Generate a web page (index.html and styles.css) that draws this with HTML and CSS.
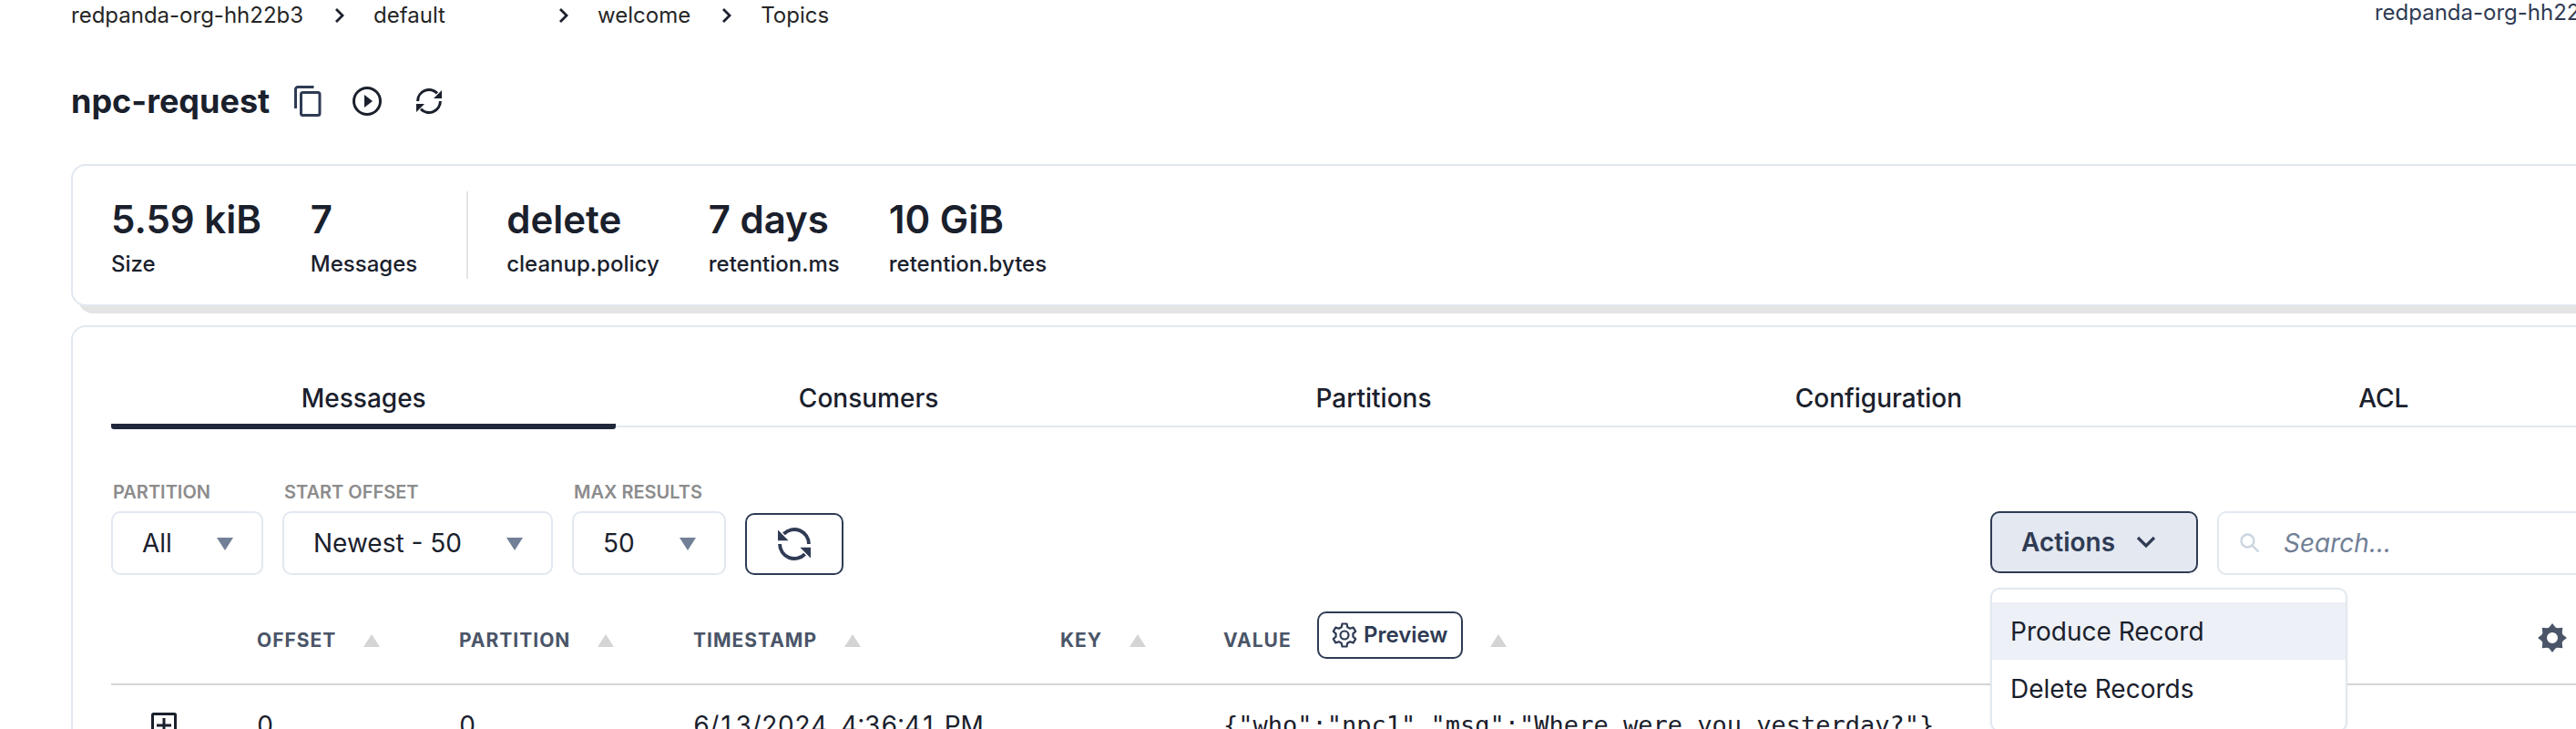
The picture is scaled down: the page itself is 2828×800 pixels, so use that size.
FILE: index.html
```html
<!DOCTYPE html>
<html lang="en">
<head>
<meta charset="utf-8">
<title>npc-request - Topics</title>
<link rel="stylesheet" href="styles.css">
</head>
<body>
<svg class="defs" aria-hidden="true">
  <symbol id="chevron" viewBox="0 0 12 18"><path d="M2 2l7 7-7 7" fill="none" stroke="currentColor" stroke-width="2.8"/></symbol>
  <symbol id="tri" viewBox="0 0 18 14"><path d="M9 0l9 14H0z" fill="currentColor"/></symbol>
  <symbol id="sync" viewBox="0 0 28 28"><path d="M1.6 14A12.4 12.4 0 0 1 23 5.4M26.400 14A12.400 12.400 0 0 1 5 22.600" fill="none" stroke="currentColor" stroke-width="3"/><path d="M28 2v9h-9zM0 26v-9h9z" fill="currentColor"/></symbol>
</svg>
<header class="topbar">
  <nav class="crumbs" aria-label="Breadcrumb">
    <a class="crumb" href="#">redpanda-org-hh22b3</a>
    <svg class="sep"><use href="#chevron"/></svg>
    <a class="crumb crumb-wide" href="#">default</a>
    <svg class="sep"><use href="#chevron"/></svg>
    <a class="crumb" href="#">welcome</a>
    <svg class="sep"><use href="#chevron"/></svg>
    <a class="crumb" href="#">Topics</a>
  </nav>
  <span class="org">redpanda-org-hh22b3</span>
</header>
<main class="page">
  <div class="title-row">
    <h1 class="title">npc-request</h1>
    <button class="icon-btn copy" aria-label="Copy name"><svg width="30" height="34" viewBox="0 0 30 34" fill="none" stroke="currentColor" stroke-width="3"><path d="M1.5 25V4a2.500 2.500 0 0 1 2.500-2.500H21.500"/><rect x="7.500" y="7.500" width="20.500" height="25" rx="2"/></svg></button>
    <button class="icon-btn play" aria-label="Play"><svg width="32" height="32" viewBox="0 0 32 32"><circle cx="16" cy="16" r="14.500" fill="none" stroke="currentColor" stroke-width="3"/><path d="M13 9l9 7-9 7z" fill="currentColor"/></svg></button>
    <button class="icon-btn" aria-label="Refresh"><svg width="28" height="28"><use href="#sync"/></svg></button>
  </div>
  <section class="card stats">
    <div class="stat"><strong class="stat-value">5.59 kiB</strong><span class="stat-label">Size</span></div>
    <div class="stat"><strong class="stat-value">7</strong><span class="stat-label">Messages</span></div>
    <div class="divider"></div>
    <div class="stat"><strong class="stat-value">delete</strong><span class="stat-label">cleanup.policy</span></div>
    <div class="stat"><strong class="stat-value">7 days</strong><span class="stat-label">retention.ms</span></div>
    <div class="stat"><strong class="stat-value">10 GiB</strong><span class="stat-label">retention.bytes</span></div>
  </section>
  <section class="card content">
    <div class="tabs" role="tablist">
      <button class="tab active" role="tab" aria-selected="true">Messages</button>
      <button class="tab" role="tab">Consumers</button>
      <button class="tab" role="tab">Partitions</button>
      <button class="tab" role="tab">Configuration</button>
      <button class="tab" role="tab">ACL</button>
    </div>
    <div class="toolbar">
      <div class="field"><label class="field-label" for="partition">PARTITION</label>
        <div class="select-box"><select class="select" id="partition"><option>All</option></select><svg class="caret"><use href="#tri"/></svg></div></div>
      <div class="field"><label class="field-label" for="offset">START OFFSET</label>
        <div class="select-box"><select class="select" id="offset"><option>Newest - 50</option></select><svg class="caret"><use href="#tri"/></svg></div></div>
      <div class="field"><label class="field-label" for="max">MAX RESULTS</label>
        <div class="select-box"><select class="select" id="max"><option>50</option></select><svg class="caret"><use href="#tri"/></svg></div></div>
      <button class="reload" aria-label="Reload messages"><svg class="flip" width="36" height="36"><use href="#sync"/></svg></button>
      <div class="actions-wrap">
        <button class="actions" aria-haspopup="menu" aria-expanded="true">Actions <svg width="22" height="14" viewBox="0 0 22 14"><path d="M2 2l9 9 9-9" fill="none" stroke="currentColor" stroke-width="3.200"/></svg></button>
        <div class="menu" role="menu">
          <button class="menu-item hover" role="menuitem">Produce Record</button>
          <button class="menu-item" role="menuitem">Delete Records</button>
        </div>
      </div>
      <div class="search-box">
        <svg width="22" height="22" viewBox="0 0 22 22" fill="none" stroke="currentColor" stroke-width="2.400"><circle cx="8.500" cy="8.500" r="7"/><path d="M13.500 13.500l7 7"/></svg>
        <input class="search" type="text" placeholder="Search..." aria-label="Search">
      </div>
    </div>
    <table class="table">
      <colgroup><col class="c-expand"><col class="c-offset"><col class="c-part"><col class="c-time"><col class="c-key"><col><col class="c-gear"></colgroup>
      <thead><tr>
        <th></th>
        <th><div class="th">OFFSET <svg class="sort"><use href="#tri"/></svg></div></th>
        <th><div class="th">PARTITION <svg class="sort"><use href="#tri"/></svg></div></th>
        <th><div class="th">TIMESTAMP <svg class="sort"><use href="#tri"/></svg></div></th>
        <th><div class="th">KEY <svg class="sort"><use href="#tri"/></svg></div></th>
        <th><div class="th">VALUE <button class="preview"><svg width="28" height="28" viewBox="0 0 28 28" fill="none" stroke="currentColor" stroke-width="2.200"><path d="M11.500 1.500h5l.8 3.700 2.800 1.600 3.600-1.200 2.500 4.300-2.800 2.500v3.200l2.800 2.500-2.500 4.300-3.600-1.200-2.800 1.600-.8 3.700h-5l-.8-3.700-2.800-1.600-3.600 1.200-2.500-4.300 2.800-2.500v-3.200L1.800 9.900l2.500-4.300 3.600 1.200 2.800-1.600z" stroke-linejoin="round"/><circle cx="14" cy="14" r="4.500"/></svg>Preview</button><svg class="sort"><use href="#tri"/></svg></div></th>
        <th><button class="gear" aria-label="Columns"><svg width="32" height="32" viewBox="0 0 32 32"><path fill="currentColor" fill-rule="evenodd" d="M16 0l3.500 4.500 2 .8L27.300 4.700l-.6 5.800.8 2L32 16l-4.500 3.500-.8 2 .6 5.800-5.800-.6-2 .8L16 32l-3.500-4.500-2-.8-5.800.6.600-5.800-.8-2L0 16l4.500-3.500.8-2-.6-5.800 5.800.6 2-.8zM16 10a6 6 0 1 0 0 12 6 6 0 0 0 0-12z"/></svg></button></th>
      </tr></thead>
      <tbody><tr>
        <td><button class="expand" aria-label="Expand"><svg width="28" height="28" viewBox="0 0 28 28" fill="none" stroke="currentColor" stroke-width="3"><rect x="1.500" y="1.500" width="25" height="25" rx="1"/><path d="M14 6v16M6 14h16"/></svg></button></td>
        <td>0</td><td>0</td><td>6/13/2024, 4:36:41 PM</td><td></td>
        <td class="code">{"who":"npc1","msg":"Where were you yesterday?"}</td><td></td>
      </tr></tbody>
    </table>
  </section>
</main>
</body>
</html>
```
FILE: styles.css
```css
* { box-sizing: border-box; }
html { overflow: hidden; }
body { margin: 0; background: #fff; color: #1a202c; font: 400 28px/36px Inter, sans-serif; overflow: hidden; height: 100vh; }
button, input, select { font: inherit; color: inherit; margin: 0; padding: 0; border: 0; background: none; }
svg { display: block; flex: none; }
a { color: inherit; text-decoration: none; }
.defs { position: absolute; width: 0; height: 0; }
.topbar { display: flex; justify-content: space-between; padding-left: 78px; height: 34px; margin-right: -34px; font-size: 24px; line-height: 34px; }
.crumbs { display: flex; align-items: center; color: #262626; }
.sep { width: 12px; height: 18px; margin: 0 31px 0 34px; color: #1a202c; }
.crumb-wide { width: 169px; }
.org { color: #2f3b54; line-height: 28px; }
.page { margin: 0 -110px 0 78px; }
.title-row { display: flex; align-items: center; height: 146px; padding-top: 8px; }
.title { margin: 0 27px 0 0; font-size: 36px; line-height: 44px; font-weight: 700; }
.icon-btn { margin-right: 38px; }
.copy { color: #2f3b54; margin-right: 34px; }
.card { border: 2px solid #e2e8f0; border-radius: 16px; background: #fff; padding: 28px 42px; }
.stats { display: flex; gap: 54px; box-shadow: 8px 8px 0 #e4e4e4; margin-bottom: 21px; }
.stat { display: flex; flex-direction: column; gap: 8px; padding-top: 6px; }
.stat-value { font-size: 42px; line-height: 50px; font-weight: 600; }
.stat-label { font-size: 24px; line-height: 32px; font-weight: 500; }
.divider { width: 2px; background: #e4e4e4; margin-right: -12px; }
.content { padding-top: 50px; }
.tabs { display: grid; grid-template-columns: repeat(5, 1fr); background: linear-gradient(#e2e8f0, #e2e8f0) 0 58px / 100% 2px no-repeat; }
.tab { height: 62px; font-weight: 500; border-bottom: 6px solid transparent; }
.active { background: linear-gradient(#20283c, #20283c) 0 100% / 100% 6px no-repeat border-box; border-radius: 3px; }
.toolbar { display: flex; align-items: flex-end; margin-top: 57px; }
.field { margin-right: 21px; }
.field-label { display: block; padding-left: 2px; font-size: 20px; line-height: 24px; font-weight: 600; color: #8c8c8c; margin-bottom: 9px; }
.select-box { position: relative; height: 70px; border: 2px solid #e2e8f0; border-radius: 10px; }
.select { appearance: none; height: 66px; padding: 0 98px 0 32px; }
.caret { position: absolute; right: 31px; top: 27px; width: 18px; height: 14px; color: #718096; transform: rotate(180deg); }
.reload { width: 108px; height: 68px; border: 2px solid #2f3b54; border-radius: 10px; color: #2f3b54; display: grid; place-items: center; }
.flip { transform: scaleX(-1); }
.actions-wrap { position: relative; margin-left: auto; align-self: flex-end; height: 70px; margin-right: 21px; }
.actions { display: flex; align-items: center; justify-content: space-between; width: 228px; height: 68px; padding: 0 44px 0 32px; border: 2px solid #2f3b54; border-radius: 10px; background: #e4e8f0; color: #2f3b54; font-weight: 600; }
.menu { position: absolute; z-index: 1; top: 84px; left: 0; width: 392px; padding: 14px 0; border: 2px solid #e2e8f0; border-radius: 10px; background: #fff; box-shadow: 0 2px 4px #0000000d; }
.menu-item { display: block; width: 100%; height: 63px; padding-left: 20px; text-align: left; }
.hover { background: #edf0f6; }
.search-box { display: flex; align-items: center; gap: 26px; width: 460px; height: 70px; padding-left: 23px; border: 2px solid #e2e8f0; border-radius: 10px; color: #cbd5e0; }
.search { width: 100%; color: #1a202c; font-size: 28px; }
.search::placeholder { color: #718096; font-style: italic; opacity: 1; }
.table { width: 100%; table-layout: fixed; border-collapse: collapse; margin-top: 18px; }
.c-expand { width: 160px; } .c-offset { width: 222px; } .c-part { width: 257px; } .c-time { width: 403px; } .c-key { width: 179px; } .c-gear { width: 108px; }
th { padding: 0; height: 102px; border-bottom: 2px solid #d6d6d6; font-size: 21px; line-height: 28px; font-weight: 700; color: #4a5568; text-align: left; letter-spacing: 1px; }
.th { display: flex; align-items: center; padding-top: 6px; }
.sort { width: 18px; height: 14px; margin-left: 30px; color: #d4d4d4; }
.preview { display: flex; align-items: center; justify-content: center; gap: 7px; width: 160px; height: 52px; margin: -12px 0 0 28px; border: 2px solid #2f3b54; border-radius: 10px; color: #2f3b54; font-size: 24px; font-weight: 600; }
.gear { color: #4a5568; display: block; }
td { padding: 26px 0; font-variant-numeric: tabular-nums; }
.expand { display: block; margin-left: 44px; }
.code { font: 27px/36px "DejaVu Sans Mono", monospace; }
```
